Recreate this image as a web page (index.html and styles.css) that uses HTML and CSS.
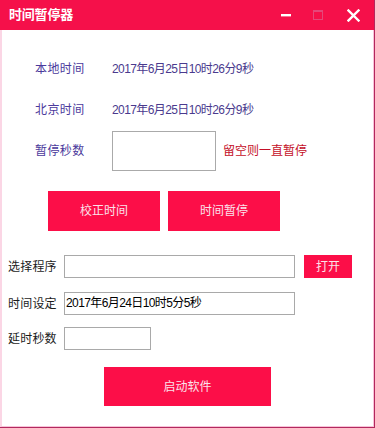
FILE: index.html
```html
<!DOCTYPE html>
<html lang="zh-CN">
<head>
<meta charset="utf-8">
<title>时间暂停器</title>
<link rel="stylesheet" href="styles.css">
</head>
<body>
<div class="window">
  <div class="titlebar">
    <span class="title">时间暂停器</span>
    <div class="controls">
      <span class="ctl ctl-min"><svg width="12" height="12" viewBox="0 0 12 12"><rect x="1" y="5" width="10" height="2.4" fill="#fff"/></svg></span>
      <span class="ctl ctl-max"><svg width="12" height="12" viewBox="0 0 12 12"><rect x="1.5" y="1.5" width="9" height="9" fill="none" stroke="#e5477a" stroke-width="1"/><rect x="1.5" y="1.5" width="9" height="1.5" fill="#e5477a"/></svg></span>
      <span class="ctl ctl-close"><svg width="13" height="13" viewBox="0 0 13 13"><path d="M1.5 1.5 L11.5 11.5 M11.5 1.5 L1.5 11.5" stroke="#fff" stroke-width="2.4" stroke-linecap="square"/></svg></span>
    </div>
  </div>
  <div class="content">
    <div class="info">
      <div class="row row-1"><span class="lbl">本地时间</span><span class="val">2017年6月25日10时26分9秒</span></div>
      <div class="row row-2"><span class="lbl">北京时间</span><span class="val">2017年6月25日10时26分9秒</span></div>
      <div class="row row-3"><span class="lbl">暂停秒数</span><span class="box"></span><span class="hint">留空则一直暂停</span></div>
    </div>
    <div class="actions">
      <button class="btn btn-big">校正时间</button>
      <button class="btn btn-big">时间暂停</button>
    </div>
    <div class="form">
      <div class="frow frow-1"><span class="flbl">选择程序</span><span class="field field-wide"></span><button class="btn btn-open">打开</button></div>
      <div class="frow frow-2"><span class="flbl">时间设定</span><span class="field field-wide">2017年6月24日10时5分5秒</span></div>
      <div class="frow frow-3"><span class="flbl">延时秒数</span><span class="field field-short"></span></div>
    </div>
    <div class="start">
      <button class="btn btn-start">启动软件</button>
    </div>
  </div>
</div>
</body>
</html>
```
FILE: styles.css
```css
* { box-sizing: border-box; }
html, body { margin: 0; padding: 0; background: #fff; }
body {
  font-family: "Liberation Sans", "Noto Sans CJK SC", sans-serif;
  font-size: 12px;
}
.window {
  width: 375px;
  height: 428px;
  display: flex;
  flex-direction: column;
  border-right: 1px solid #b2285e;
  border-bottom: 1px solid #b2285e;
  background: #fff;
}
.titlebar {
  height: 30px;
  background: #f5104a;
  display: flex;
  align-items: center;
  justify-content: space-between;
  padding-left: 9px;
}
.title {
  color: #fff;
  font-weight: bold;
  font-size: 13px;
  line-height: 16px;
  letter-spacing: -0.2px;
}
.controls { display: flex; align-items: center; height: 30px; }
.ctl { display: flex; align-items: center; justify-content: center; }
.ctl-min { width: 12px; margin-right: 20px; }
.ctl-max { width: 12px; margin-right: 23px; }
.ctl-close { width: 13px; margin-right: 14px; }
.content {
  flex: 1;
  border-left: 2px solid #fbd6e5;
  border-right: 1px solid #f7c3d8;
  border-bottom: 1px solid #f7c3d8;
  padding-top: 27px;
}
.info { padding-left: 33px; }
.row { display: flex; align-items: center; }
.row-1 { height: 24px; }
.row-2 { height: 24px; margin-top: 17px; }
.row-3 { height: 40px; margin-top: 9px; }
.lbl {
  width: 77px;
  color: #4b3a9c;
  font-size: 12px;
  line-height: 16px;
  letter-spacing: 0.4px;
}
.val {
  color: #4a3a8e;
  font-size: 12px;
  line-height: 16px;
  letter-spacing: -0.6px;
}
.box {
  width: 104px;
  height: 40px;
  border: 1px solid #aaa;
  background: #fff;
}
.hint {
  margin-left: 7px;
  color: #c40f28;
  font-size: 12px;
  line-height: 16px;
}
.actions {
  display: flex;
  gap: 8px;
  padding-left: 46px;
  margin-top: 20px;
}
.btn {
  border: none;
  margin: 0;
  padding: 0;
  background: #fc0e48;
  color: #fbe2ea;
  font-family: "Liberation Sans", "Noto Sans CJK SC", sans-serif;
  font-size: 12px;
  line-height: 16px;
  cursor: pointer;
}
.btn-big { width: 112px; height: 40px; }
.form { padding-left: 6px; margin-top: 24px; }
.frow { display: flex; align-items: center; height: 23px; }
.frow-2 { margin-top: 14px; }
.frow-3 { margin-top: 12px; }
.flbl {
  width: 56px;
  color: #1c1c1c;
  font-size: 12px;
  line-height: 16px;
  letter-spacing: 0.2px;
}
.field {
  height: 23px;
  border: 1px solid #a9a9a9;
  background: #fff;
  color: #000;
  font-size: 12px;
  line-height: 21px;
  padding-left: 1px;
  letter-spacing: -0.6px;
  white-space: nowrap;
}
.field-wide { width: 231px; }
.field-short { width: 87px; }
.btn-open { width: 48px; height: 23px; margin-left: 9px; }
.start { padding-left: 102px; margin-top: 17px; }
.btn-start { width: 167px; height: 39px; }
```
